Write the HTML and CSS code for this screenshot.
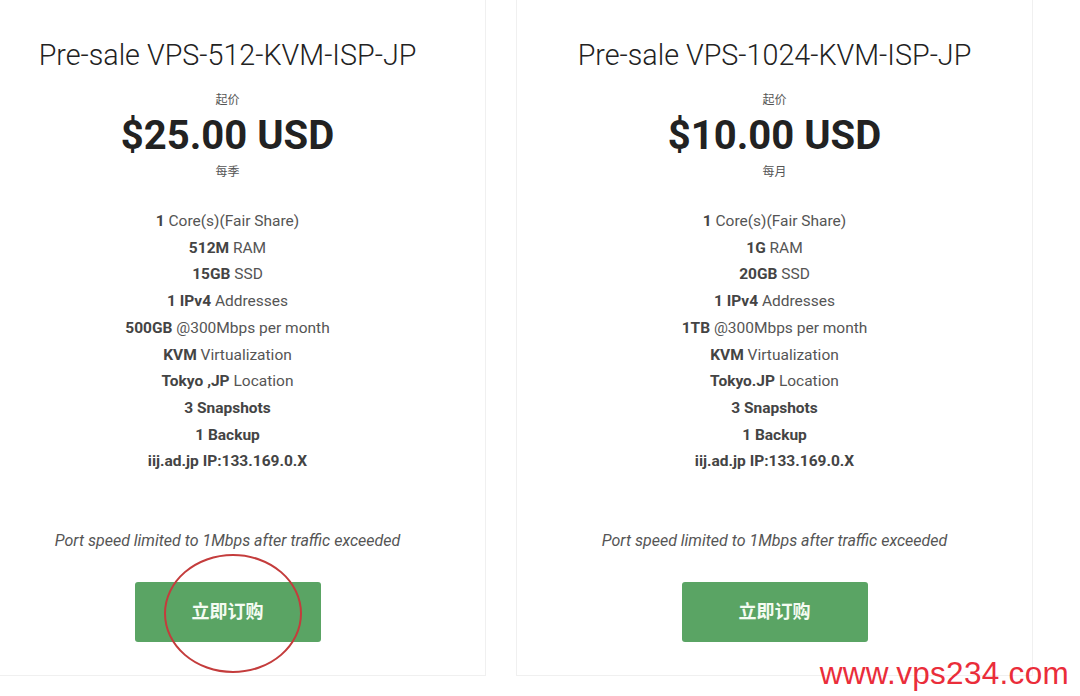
FILE: index.html
```html
<!DOCTYPE html>
<html lang="zh-CN">
<head>
    <meta charset="UTF-8">
    <meta name="viewport" content="width=device-width, initial-scale=1.0">
    <title>Pre-sale VPS JP</title>
    <link rel="stylesheet" href="styles.css">
</head>
<body>
    <div class="plans">
        <!-- Plan 512 -->
        <div class="plan">
            <h3 class="plan-title">Pre-sale VPS-512-KVM-ISP-JP</h3>
            <div class="price-box">
                <span class="price-label">起价</span>
                <span class="price">$25.00 USD</span>
                <span class="price-label">每季</span>
            </div>
            <ul class="features">
                <li><b>1</b> Core(s)(Fair Share)</li>
                <li><b>512M</b> RAM</li>
                <li><b>15GB</b> SSD</li>
                <li><b>1 IPv4</b> Addresses</li>
                <li><b>500GB</b> @300Mbps per month</li>
                <li><b>KVM</b> Virtualization</li>
                <li><b>Tokyo ,JP</b> Location</li>
                <li><b>3 Snapshots</b></li>
                <li><b>1 Backup</b></li>
                <li><b>iij.ad.jp IP:133.169.0.X</b></li>
            </ul>
            <p class="note">Port speed limited to 1Mbps after traffic exceeded</p>
            <div class="order">
                <a class="btn-order" href="#">立即订购</a>
                <span class="mark"></span>
            </div>
        </div>

        <!-- Plan 1024 -->
        <div class="plan">
            <h3 class="plan-title">Pre-sale VPS-1024-KVM-ISP-JP</h3>
            <div class="price-box">
                <span class="price-label">起价</span>
                <span class="price">$10.00 USD</span>
                <span class="price-label">每月</span>
            </div>
            <ul class="features">
                <li><b>1</b> Core(s)(Fair Share)</li>
                <li><b>1G</b> RAM</li>
                <li><b>20GB</b> SSD</li>
                <li><b>1 IPv4</b> Addresses</li>
                <li><b>1TB</b> @300Mbps per month</li>
                <li><b>KVM</b> Virtualization</li>
                <li><b>Tokyo.JP</b> Location</li>
                <li><b>3 Snapshots</b></li>
                <li><b>1 Backup</b></li>
                <li><b>iij.ad.jp IP:133.169.0.X</b></li>
            </ul>
            <p class="note">Port speed limited to 1Mbps after traffic exceeded</p>
            <div class="order">
                <a class="btn-order" href="#">立即订购</a>
            </div>
        </div>
    </div>

    <div class="watermark">www.vps234.com</div>
</body>
</html>
```

FILE: styles.css
```css
body {
    margin: 0;
    background: #fff;
    font-family: Roboto, "Noto Sans CJK SC", sans-serif;
    color: #555;
    height: 696px;
    overflow: hidden;
    position: relative;
}

.plans {
    display: flex;
    gap: 30px;
    margin-left: -31px;
}

.plan {
    width: 517px;
    height: 676px;
    box-sizing: border-box;
    border: 1px solid #f0f0f0;
    border-top: none;
    display: flex;
    flex-direction: column;
    align-items: center;
    text-align: center;
}

.plan-title {
    margin: 38px 0 0;
    font-size: 28.7px;
    line-height: 34px;
    font-weight: 300;
    color: #222;
}

.price-box {
    display: flex;
    flex-direction: column;
    align-items: center;
    margin-top: 18px;
}

.price-label {
    font-size: 12px;
    line-height: 20px;
    color: #555;
}

.price {
    font-size: 40px;
    line-height: 52px;
    font-weight: 700;
    color: #222;
}

.features {
    list-style: none;
    margin: 26px 0 0;
    padding: 0;
    font-size: 15.5px;
    line-height: 26.7px;
}

.features b {
    color: #444;
    font-weight: 700;
}

.note {
    margin: 56px 0 0;
    font-size: 16px;
    line-height: 20px;
    font-style: italic;
    color: #555;
}

.order {
    position: relative;
    margin-top: 31px;
}

.btn-order {
    display: block;
    width: 186px;
    height: 60px;
    line-height: 60px;
    background: #5aa464;
    border-radius: 3px;
    color: #f4fbf2;
    font-size: 18px;
    font-weight: 700;
    text-decoration: none;
}

/* circle drawn over the first button */
.mark {
    position: absolute;
    left: 29px;
    top: -28px;
    width: 134px;
    height: 115px;
    border: 2px solid #c43c3c;
    border-radius: 50%;
    pointer-events: none;
}

.watermark {
    position: absolute;
    right: 11px;
    bottom: 4px;
    font-family: "Liberation Sans", Arial, sans-serif;
    font-size: 31.5px;
    color: #ea2d3a;
    letter-spacing: 0.3px;
}
```
